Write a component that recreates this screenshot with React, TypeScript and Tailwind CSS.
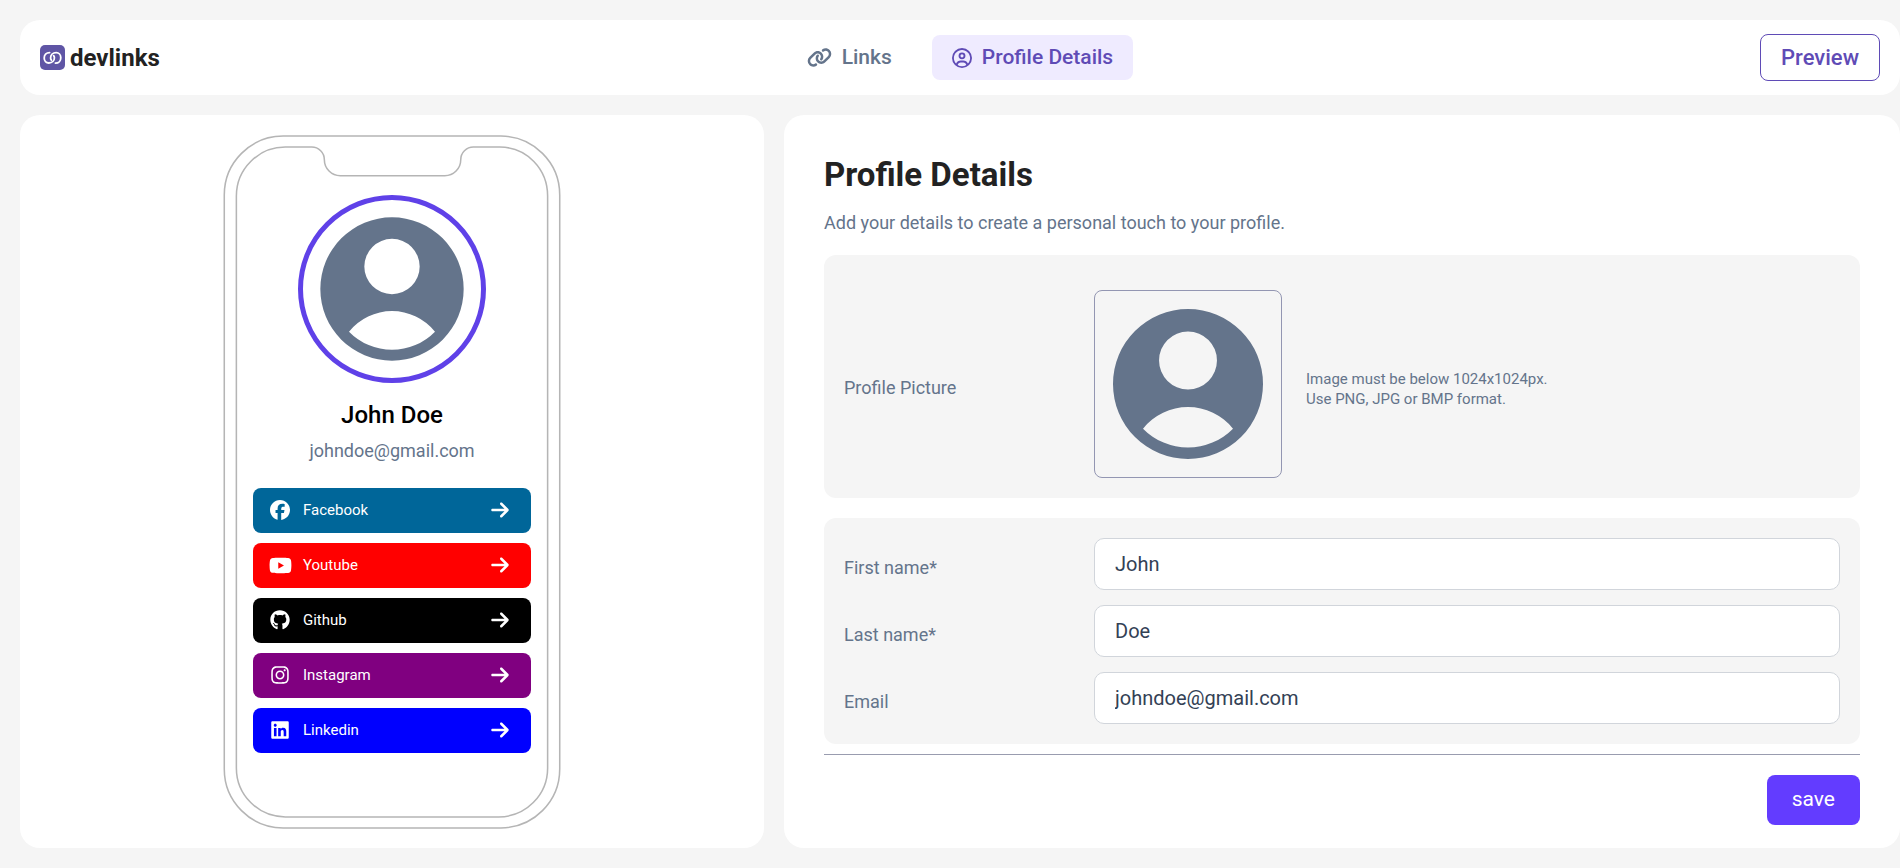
import React, { useState } from "react";
import {
  FaArrowRight,
  FaFacebook,
  FaGithub,
  FaInstagram,
  FaLink,
  FaLinkedin,
  FaRegCircleUser,
  FaYoutube,
} from "react-icons/fa6";
import type { IconType } from "react-icons";

interface SocialLink {
  name: string;
  href: string;
  icon: IconType;
  iconSize: number;
  className: string;
}

const socialLinks: SocialLink[] = [
  {
    name: "Facebook",
    href: "#facebook",
    icon: FaFacebook,
    iconSize: 20,
    className: "bg-[#006699]",
  },
  {
    name: "Youtube",
    href: "#youtube",
    icon: FaYoutube,
    iconSize: 23,
    className: "bg-[#ff0000]",
  },
  {
    name: "Github",
    href: "#github",
    icon: FaGithub,
    iconSize: 20,
    className: "bg-black",
  },
  {
    name: "Instagram",
    href: "#instagram",
    icon: FaInstagram,
    iconSize: 20,
    className: "bg-[#800080]",
  },
  {
    name: "Linkedin",
    href: "#linkedin",
    icon: FaLinkedin,
    iconSize: 20,
    className: "bg-[#0000ff]",
  },
];

interface Profile {
  firstName: string;
  lastName: string;
  email: string;
}

const App: React.FC = () => {
  const [profile, setProfile] = useState<Profile>({
    firstName: "John",
    lastName: "Doe",
    email: "johndoe@gmail.com",
  });

  const update = (key: keyof Profile) => (value: string) =>
    setProfile((prev) => ({ ...prev, [key]: value }));

  return (
    <div className="flex min-h-screen flex-col gap-5 bg-[#f5f5f5] py-5 pl-5 font-['Roboto','Liberation_Sans',sans-serif] text-[#64748b]">
      <Header />
      <main className="grid flex-1 grid-cols-[2fr_3fr] gap-5">
        <section className="flex justify-center rounded-[20px] bg-white pt-5">
          <PhonePreview profile={profile} />
        </section>

        <section className="rounded-[20px] bg-white px-10 pt-10">
          <h1 className="text-[33px] leading-10 font-bold text-[#222222]">
            Profile Details
          </h1>
          <p className="mt-4 text-lg leading-6">
            Add your details to create a personal touch to your profile.
          </p>

          <div className="mt-5 flex items-center rounded-xl bg-[#f5f5f5] px-5 pt-[35px] pb-5">
            <span className="w-[250px] shrink-0 pt-2 text-lg leading-6">
              Profile Picture
            </span>
            <button
              type="button"
              aria-label="Upload profile picture"
              className="flex size-[188px] shrink-0 items-center justify-center rounded-lg border border-[#9396b2]"
            >
              <Avatar className="size-[180px]" />
            </button>
            <p className="ml-6 pt-2.5 text-[15px] leading-5">
              Image must be below 1024x1024px.
              <br />
              Use PNG, JPG or BMP format.
            </p>
          </div>

          <form onSubmit={(e) => e.preventDefault()}>
            <div className="mt-5 flex flex-col gap-[15px] rounded-xl bg-[#f5f5f5] p-5">
              <Field
                id="firstName"
                label="First name*"
                value={profile.firstName}
                onChange={update("firstName")}
              />
              <Field
                id="lastName"
                label="Last name*"
                value={profile.lastName}
                onChange={update("lastName")}
              />
              <Field
                id="email"
                label="Email"
                type="email"
                value={profile.email}
                onChange={update("email")}
              />
            </div>
            <hr className="mt-2.5 border-[#999caf]" />
            <div className="mt-5 flex justify-end">
              <button
                type="submit"
                className="h-[50px] rounded-lg bg-[#633cff] px-[25px] text-[21px] text-white"
              >
                save
              </button>
            </div>
          </form>
        </section>
      </main>
    </div>
  );
};

const Header: React.FC = () => (
  <header className="flex h-[75px] items-center justify-between rounded-[20px] bg-white px-5">
    <a href="#home" className="flex items-center gap-[5px]">
      <Logo />
      <span className="text-2xl leading-7 font-bold text-[#222222]">
        devlinks
      </span>
    </a>
    <nav className="flex items-center gap-5 text-[21px] font-medium">
      <a href="#links" className="flex h-[45px] items-center gap-2.5 px-5">
        <FaLink size={25} />
        Links
      </a>
      <a
        href="#profile"
        className="flex h-[45px] items-center gap-2.5 rounded-lg bg-[#efebff] px-5 text-[#5f4bb6]"
      >
        <FaRegCircleUser size={20} />
        Profile Details
      </a>
    </nav>
    <button
      type="button"
      className="h-[47px] rounded-lg border border-[#5f4bb6] px-5 text-[22px] font-medium text-[#5f4bb6]"
    >
      Preview
    </button>
  </header>
);

const PhonePreview: React.FC<{ profile: Profile }> = ({ profile }) => (
  <div className="relative h-[694px] w-[338px]">
    <PhoneFrame />
    <div className="relative flex flex-col items-center px-[30px] pt-[60px]">
      <div className="flex size-[188px] items-center justify-center rounded-full border-[5px] border-[#5f41e8]">
        <Avatar className="size-[172px] shrink-0" />
      </div>
      <h2 className="mt-[18px] text-2xl leading-7 font-medium text-black">
        {profile.firstName} {profile.lastName}
      </h2>
      <p className="mt-2 text-lg leading-7">{profile.email}</p>
      <ul className="mt-[23px] flex w-full flex-col gap-2.5">
        {socialLinks.map(({ name, href, icon: Icon, iconSize, className }) => (
          <li key={name}>
            <a
              href={href}
              className={`flex h-[45px] items-center rounded-lg pr-[21px] pb-px pl-[15px] text-[15px] text-white ${className}`}
            >
              <span className="flex w-6 justify-center">
                <Icon size={iconSize} />
              </span>
              <span className="ml-[11px] flex-1">{name}</span>
              <FaArrowRight size={20} />
            </a>
          </li>
        ))}
      </ul>
    </div>
  </div>
);

interface FieldProps {
  id: string;
  label: string;
  type?: string;
  value: string;
  onChange: (value: string) => void;
}

const Field: React.FC<FieldProps> = ({
  id,
  label,
  type = "text",
  value,
  onChange,
}) => (
  <div className="flex items-center">
    <label htmlFor={id} className="w-[250px] shrink-0 pt-2 text-lg leading-6">
      {label}
    </label>
    <input
      id={id}
      type={type}
      value={value}
      onChange={(e) => onChange(e.target.value)}
      className="h-[52px] min-w-0 flex-1 rounded-[10px] border border-[#d1d5db] bg-white px-5 text-xl text-[#334155]"
    />
  </div>
);

const Logo: React.FC = () => (
  <svg viewBox="0 0 25 25" className="size-[25px]" fill="none">
    <rect width="25" height="25" rx="5" fill="#5f55a5" />
    <g stroke="#fff" strokeWidth="1.8" strokeLinecap="round">
      <path d="M9.6 7.6C6.2 7.6 4.2 10 4.2 13s2 5 4.6 5c3.400 0 5.600-2.400 5.600-5.200 0-1-.3-1.600-.8-2.200" />
      <path d="M15.4 18.100c3.400 0 5.400-2.400 5.400-5.400s-2-5-4.600-5c-3.400 0-5.600 2.400-5.600 5.200 0 1 .3 1.600.8 2.200" />
    </g>
  </svg>
);

const Avatar: React.FC<{ className: string }> = ({ className }) => (
  <svg viewBox="0 0 24 24" className={className} fill="#64748b">
    <path
      fillRule="evenodd"
      d="M12 2a10 10 0 1 0 0 20 10 10 0 1 0 0-20ZM12 5a3.86 3.86 0 1 1 0 7.72 3.86 3.86 0 1 1 0-7.72ZM6 17.95a7.7 7.7 0 0 1 12 0 8.4 8.4 0 0 1-12 0Z"
    />
  </svg>
);

const PhoneFrame: React.FC = () => (
  <svg
    viewBox="0 0 307 631"
    className="absolute inset-0 size-full"
    fill="none"
    stroke="#b5b5b5"
    strokeWidth="1.4"
  >
    <path d="M1 54.5C1 24.953 24.953 1 54.5 1h198C282.047 1 306 24.953 306 54.5v522c0 29.547-23.953 53.5-53.5 53.5h-198C24.953 630 1 606.047 1 576.5v-522Z" />
    <path d="M12 55.5C12 30.923 31.923 11 56.5 11h24C86.851 11 92 16.149 92 22.5 92 30.508 98.492 37 106.5 37h95c8.008 0 14.5-6.492 14.5-14.5C216 16.149 221.149 11 227.5 11h24c24.577 0 43.5 19.923 43.5 44.5v520c0 24.577-19.923 44.5-44.5 44.5h-194C31.923 620 12 600.077 12 575.5v-520Z" />
  </svg>
);

export default App;
